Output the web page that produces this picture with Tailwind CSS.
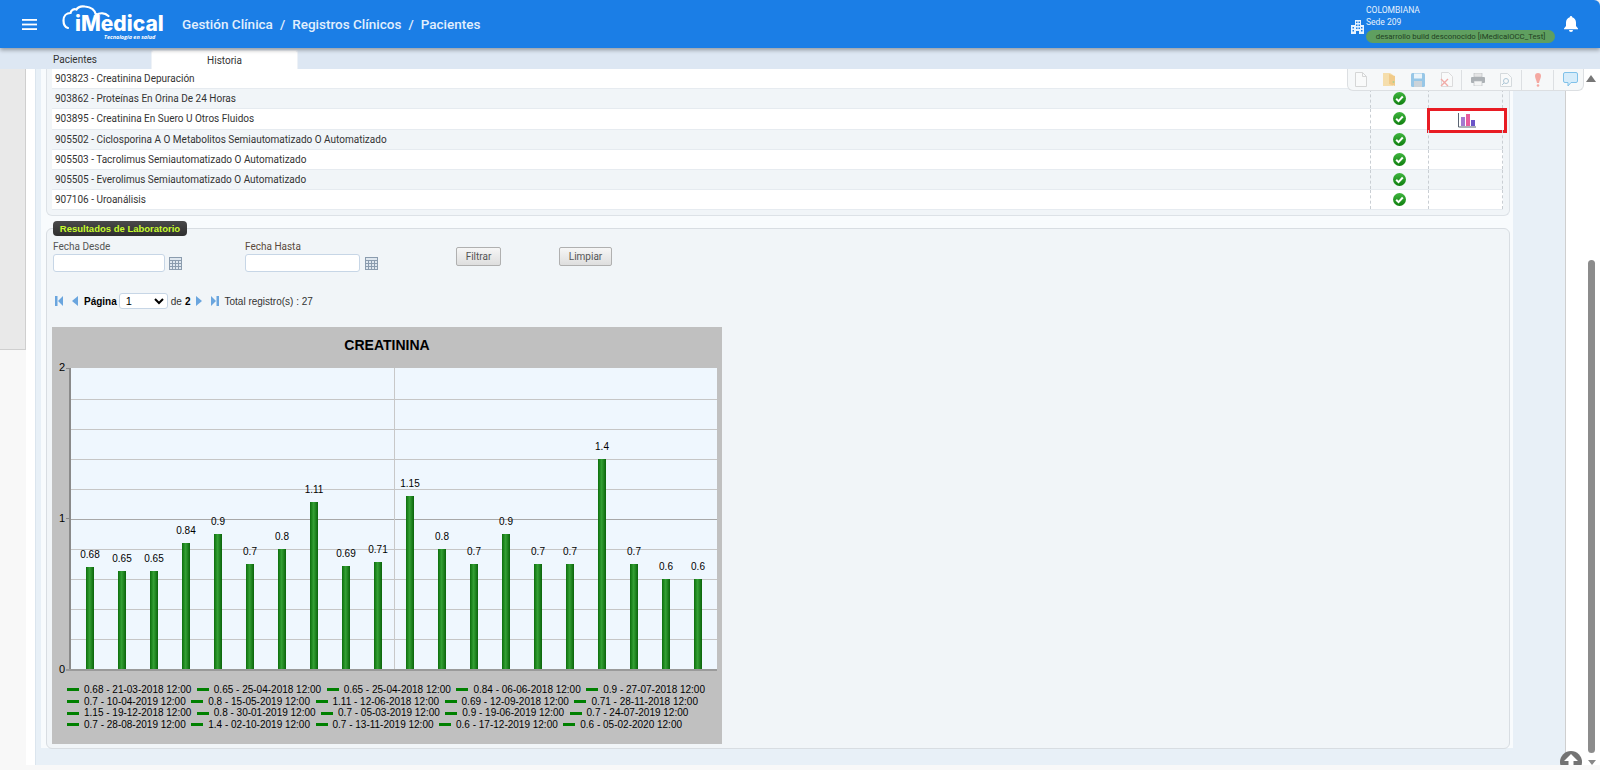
<!DOCTYPE html>
<html lang="es">
<head>
    <meta charset="UTF-8">
    <title>iMedical - Pacientes</title>
    <script src="https://cdn.jsdelivr.net/npm/@tailwindcss/browser@4"></script>
</head>
<body class="bg-[#f8f8f8] h-[770px] w-[1600px] overflow-hidden font-['Roboto',sans-serif] text-[10px] text-[#333]">

    <!-- Top bar -->
    <header class="relative z-20 h-[48px] bg-[#1b7ee6] rounded-tr-[6px] shadow-[0_2px_4px_rgba(0,0,0,0.35)] flex items-center text-white">
        <svg class="ml-[22px] w-[15px] h-[11px]" viewBox="0 0 15 11" fill="#fff">
            <rect width="15" height="1.8"/><rect y="4.6" width="15" height="1.8"/><rect y="9.2" width="15" height="1.8"/>
        </svg>
        <div class="relative ml-[25px] w-[106px] h-[48px]">
            <svg class="absolute left-0 top-0" width="106" height="30" viewBox="0 0 106 30" fill="none" stroke="#fff" stroke-width="2.200" stroke-linecap="round">
                <path d="M6 28 C2.500 27 1.500 23.500 1.500 20.500 C1.500 16 4.500 13 8.500 13 C9 10 12 8.500 14.500 9.500 C16.500 6 20 6 23 6.500 C29 7 33 10 34 15 C38 12.500 43 13 46.500 16"/>
            </svg>
            <span class="absolute left-[13px] top-[11px] font-['Inter',sans-serif] font-extrabold text-[21px] leading-[26px]">iMedical</span>
            <span class="absolute left-[42px] top-[33px] font-['Open_Sans',sans-serif] font-bold italic text-[5.500px] leading-[8px] whitespace-nowrap">Tecnología en salud</span>
        </div>
        <nav class="ml-[14px] flex gap-[7px] text-[13.500px] font-medium text-[#e2effd]">
            <span>Gestión Clínica</span><span>/</span><span>Registros Clínicos</span><span>/</span><span>Pacientes</span>
        </nav>
        <div class="ml-auto flex items-center mr-[22px]">
            <svg class="w-[13px] h-[14px] mt-[5px]" viewBox="0 0 13 14" fill="#e8f3ff">
                <path d="M4 0h6v5h3v9H8v-3H5v3H0V5h4zM5 1.500v1.500h1.500V1.500zM7.500 1.500v1.500H9V1.500zM5 4.500V6h1.500V4.500zM7.500 4.500V6H9V4.500zM1.500 7v1.500H3V7zM5 7.500V9h1.500V7.500zM7.500 7.500V9H9V7.500zM10 7v1.500h1.500V7zM1.500 10v1.500H3V10zM10 10v1.500h1.500V10z" fill-rule="evenodd"/>
            </svg>
            <div class="ml-[2px] w-[189px] h-[48px] relative text-[8.500px] leading-[10px] text-[#e6f1fd]">
                <div class="absolute left-[0px] top-[5px]">COLOMBIANA</div>
                <div class="absolute left-[0px] top-[17px]">Sede 209</div>
                <div class="absolute left-0 top-[30px] w-[189px] h-[13px] rounded-full bg-[#5f9f60] text-[#1f3f22] text-[7.800px] leading-[13px] text-center whitespace-nowrap">desarrollo build desconocido [iMedicalOCC_Test]</div>
            </div>
            <svg class="ml-[9px] w-[14px] h-[16px]" viewBox="0 0 14 16" fill="#fff">
                <path d="M7 0a1.200 1.200 0 0 1 1.200 1.300C10.600 1.900 12 4 12 6.500V10l2 2.500v.7H0v-.7L2 10V6.500C2 4 3.400 1.900 5.800 1.300A1.200 1.200 0 0 1 7 0zM5 14h4a2 2 0 0 1-4 0z"/>
            </svg>
        </div>
    </header>

    <!-- Tabs -->
    <div class="h-[21px] bg-[#dde7f3] flex items-end">
        <div class="w-[151px] pl-[53px] h-[19px] leading-[20px] text-[10px]">Pacientes</div>
        <div class="w-[147px] h-[19px] leading-[20px] text-[10px] text-center bg-white rounded-t-[3px] border-t border-x border-[#eef2f7]">Historia</div>
    </div>

    <!-- Page body -->
    <div class="relative h-[696px] flex overflow-hidden">
        <div class="w-[26px] h-[281px] bg-[#e9e9e9] border-r border-b border-[#cfcfcf]"></div>
        <div class="w-[9px] bg-white"></div>

        <main class="w-[1530px] bg-[#e8f0f7] border-l border-[#dbe5ee] pl-[5px]">
            <div class="w-[1472px] h-[679px] bg-[#f8fbfd] pl-[5px] pr-[3px]">

                <!-- Exam list -->
                <section class="h-[147px] bg-[#f1f5f8] border border-t-0 border-[#dde2e7] rounded-b-[6px] pl-[5px] pr-[6px]">
                    <div id="rows"></div>
                </section>

                <!-- Lab results -->
                <section class="mt-[12px] h-[521px] bg-[#f1f5f8] border border-[#d8dde2] rounded-[6px] px-[6px]">
                    <div class="-mt-[8px] h-[15px] w-[134px] rounded-[4px] bg-gradient-to-b from-[#4a4a4a] to-[#2e2e2e] text-center font-['Liberation_Sans',sans-serif] font-bold text-[9.500px] leading-[15px] text-[#c6fb2d] whitespace-nowrap">Resultados de Laboratorio</div>

                    <div class="mt-[4px] flex h-[33px]">
                        <div class="w-[192px]">
                            <div class="h-[14px] leading-[14px] text-[#555]">Fecha Desde</div>
                            <div class="flex items-center">
                                <input class="w-[112px] h-[18px] bg-white border border-[#c7d6e6] rounded-[3px]">
                                <svg class="ml-[4px] w-[13px] h-[13px]" viewBox="0 0 13 13" fill="none" stroke="#8b9cae"><rect x=".5" y=".5" width="12" height="12" fill="#dfe7ef"/><path d="M.5 3.500h12M.5 6.500h12M.5 9.500h12M3.500 3.500v9M6.500 3.500v9M9.500 3.500v9"/></svg>
                            </div>
                        </div>
                        <div class="w-[211px]">
                            <div class="h-[14px] leading-[14px] text-[#5b4a3a]">Fecha Hasta</div>
                            <div class="flex items-center">
                                <input class="w-[115px] h-[18px] bg-white border border-[#c7d6e6] rounded-[3px]">
                                <svg class="ml-[5px] w-[13px] h-[13px]" viewBox="0 0 13 13" fill="none" stroke="#8b9cae"><rect x=".5" y=".5" width="12" height="12" fill="#dfe7ef"/><path d="M.5 3.500h12M.5 6.500h12M.5 9.500h12M3.500 3.500v9M6.500 3.500v9M9.500 3.500v9"/></svg>
                            </div>
                        </div>
                        <button class="mt-[7px] w-[45px] h-[19px] rounded-[2px] border border-[#b0b0b0] bg-gradient-to-b from-[#f6f6f6] to-[#dedede] text-[#555] text-[10px]">Filtrar</button>
                        <button class="mt-[7px] ml-[58px] w-[53px] h-[19px] rounded-[2px] border border-[#b0b0b0] bg-gradient-to-b from-[#f6f6f6] to-[#dedede] text-[#555] text-[10px]">Limpiar</button>
                    </div>

                    <!-- Pager -->
                    <div class="mt-[20px] h-[16px] flex items-center font-['Liberation_Sans',sans-serif] text-[10px]">
                        <svg class="ml-[2px] w-[8px] h-[10px]" viewBox="0 0 8 10" fill="#6aa5de"><rect width="2.500" height="10"/><path d="M8 0v10L3 5z"/></svg>
                        <svg class="ml-[9px] w-[6px] h-[10px]" viewBox="0 0 6 10" fill="#6aa5de"><path d="M6 0v10L0 5z"/></svg>
                        <b class="ml-[6px] text-black">Página</b>
                        <select class="ml-[2px] w-[49px] h-[16px] bg-white border border-[#c7d6e6] rounded-[3px] text-[11px] text-black pl-[2px]"><option>1</option><option>2</option></select>
                        <span class="ml-[3px]">de</span>
                        <b class="ml-[3px] text-black">2</b>
                        <svg class="ml-[6px] w-[6px] h-[10px]" viewBox="0 0 6 10" fill="#6aa5de"><path d="M0 0v10l6-5z"/></svg>
                        <svg class="ml-[9px] w-[8px] h-[10px]" viewBox="0 0 8 10" fill="#6aa5de"><rect x="5.500" width="2.500" height="10"/><path d="M0 0v10l5-5z"/></svg>
                        <span class="ml-[5px]">Total registro(s) : 27</span>
                    </div>

                    <!-- Chart -->
                    <div class="mt-[18px] -ml-[1px] w-[670px] h-[417px] bg-[#c0c0c0] font-['Liberation_Sans',sans-serif] text-black">
                        <svg id="chart" class="block" width="670" height="350" viewBox="0 0 670 350" font-family="'Liberation Sans',sans-serif"></svg>
                        <div id="legend" class="mt-[7px] pl-[15px] text-[10px] leading-[11.700px]"></div>
                    </div>
                </section>
            </div>
        </main>

        <div class="flex-1 bg-white border-l border-[#cfcfcf]"></div>

        <!-- Floating toolbar -->
        <div class="absolute top-0 left-[1347px] w-[237px] h-[22px] bg-[#f6f8f9] border border-t-0 border-[#dcdfe2] rounded-b-[6px] flex items-center">
            <svg class="ml-[7px] w-[12px] h-[15px] opacity-70" viewBox="0 0 12 15" fill="#fbfbfb" stroke="#c8c8c8"><path d="M.5.5h7l4 4v10H.5z"/><path d="M7.500.5v4h4" fill="none"/></svg>
            <svg class="ml-[15px] w-[15px] h-[15px] opacity-70" viewBox="0 0 15 15"><path d="M1 1h7l3 2v11H1z" fill="#f5d48c"/><path d="M7 2l6 2v10l-6-2z" fill="#f0b95c"/><circle cx="11.500" cy="10" r="1" fill="#8fbf6a"/></svg>
            <svg class="ml-[14px] w-[14px] h-[14px] opacity-70" viewBox="0 0 14 14"><rect width="14" height="14" rx="1.500" fill="#6fb3e0"/><rect x="3" y="0.500" width="8" height="5" fill="#e6f3fb"/><rect x="3" y="8" width="8" height="6" fill="#b9c4cc"/></svg>
            <svg class="ml-[15px] w-[13px] h-[15px] opacity-70" viewBox="0 0 13 15" fill="#fbfbfb" stroke="#d0d0d0"><path d="M1.500.5h7l4 4v10h-11z"/><path d="M1 7l7 7M8 7l-7 7" stroke="#ef8a84" stroke-width="1.400"/></svg>
            <div class="ml-[8px] w-px h-[20px] bg-[#dcdfe2]"></div>
            <svg class="ml-[9px] w-[14px] h-[13px] opacity-70" viewBox="0 0 14 13"><rect x="3" width="8" height="4" fill="#dedede" stroke="#9aa0a5" stroke-width=".6"/><rect y="4" width="14" height="6" rx="1" fill="#8d9499"/><rect x="3" y="8" width="8" height="5" fill="#f4f4f4" stroke="#9aa0a5" stroke-width=".6"/></svg>
            <svg class="ml-[15px] w-[12px] h-[14px] opacity-70" viewBox="0 0 12 14" fill="#fbfbfb" stroke="#c8ced2"><path d="M.5.5h7l4 4v9H.5z"/><circle cx="6" cy="8" r="2.500" stroke="#8fb3c9"/><path d="M4 10l-2 2" stroke="#8fb3c9"/></svg>
            <div class="ml-[9px] w-px h-[20px] bg-[#dcdfe2]"></div>
            <svg class="ml-[13px] w-[6px] h-[14px] opacity-70" viewBox="0 0 6 14" fill="#f4877d"><path d="M0 3a3 3 0 0 1 6 0c0 2-1.500 4-2 7H2C1.500 7 0 5 0 3z"/><circle cx="3" cy="12.500" r="1.300"/></svg>
            <div class="ml-[12px] w-px h-[20px] bg-[#dcdfe2]"></div>
            <svg class="ml-[9px] w-[15px] h-[15px] opacity-80" viewBox="0 0 15 15"><path d="M2 .5h11a1.500 1.500 0 0 1 1.500 1.500v7a1.500 1.500 0 0 1-1.500 1.500H8L5 14v-3.500H2A1.500 1.500 0 0 1 .5 9V2A1.500 1.500 0 0 1 2 .5z" fill="#cfeafb" stroke="#63b4e6"/></svg>
        </div>

        <!-- Scrollbar -->
        <svg class="absolute left-[1586px] top-[6px] w-[10px] h-[7px]" viewBox="0 0 10 7" fill="#777"><path d="M5 0l5 7H0z"/></svg>
        <div class="absolute left-[1588px] top-[191px] w-[7px] h-[493px] rounded-full bg-[#8c8c8c]"></div>
        <svg class="absolute left-[1588px] top-[691px] w-[8px] h-[5px]" viewBox="0 0 8 5" fill="#888"><path d="M0 0h8L4 5z"/></svg>

        <!-- Back to top -->
        <div class="absolute left-[1560px] top-[682px] w-[22px] h-[22px] rounded-full bg-[#737373] flex items-start justify-center">
            <svg class="mt-[3px] w-[14px] h-[12px]" viewBox="0 0 14 12" fill="#fff"><path d="M7 0l7 7H9.500v5h-5V7H0z"/></svg>
        </div>
    </div>

    <script>
        const exams = [
            ['903823 - Creatinina Depuración', false],
            ['903862 - Proteínas En Orina De 24 Horas', true],
            ['903895 - Creatinina En Suero U Otros Fluidos', true],
            ['905502 - Ciclosporina A O Metabolitos Semiautomatizado O Automatizado', true],
            ['905503 - Tacrolimus Semiautomatizado O Automatizado', true],
            ['905505 - Everolimus Semiautomatizado O Automatizado', true],
            ['907106 - Uroanálisis', true]
        ];
        const check = `<svg width="13" height="13" viewBox="0 0 13 13"><defs><linearGradient id="ok" x1="0" x2="0" y1="0" y2="1"><stop offset="0" stop-color="#3fb53f"/><stop offset="1" stop-color="#0f7f0f"/></linearGradient></defs><circle cx="6.500" cy="6.500" r="6.500" fill="url(#ok)"/><path d="M3.200 6.800l2.300 2.300 4.300-4.600" fill="none" stroke="#fff" stroke-width="2"/></svg>`;
        const chartIcon = `<svg width="18" height="15" viewBox="0 0 18 15"><path d="M.5 0v14H18" fill="none" stroke="#5b6472"/><rect x="3" y="4" width="4" height="9" fill="#a37ad0"/><rect x="8" y="1" width="4" height="12" fill="#e85c9c"/><rect x="13" y="7" width="4" height="6" fill="#6b55c8"/></svg>`;

        document.getElementById('rows').innerHTML = exams.map(([name, ok], i) => `
            <div class="h-[20.200px] flex ${i % 2 ? 'bg-[#f1f5f8]' : 'bg-white'} border-b border-[#e6ebf0]">
                <div class="w-[1318px] pl-[3px] leading-[19px] text-[#333]">${name}</div>
                <div class="relative w-[58px] flex items-center justify-center border-l border-dashed border-[#c9ced3]">${ok ? check : ''}</div>
                <div class="relative w-[75px] flex items-center justify-center border-x border-dashed border-[#c9ced3]">
                    ${i === 2 ? `<div class="absolute -left-[2px] -top-[1px] w-[80px] h-[25px] border-[3px] border-[#e81c24] bg-white flex items-center justify-center">${chartIcon}</div>` : ''}
                </div>
            </div>`).join('');

        const points = [
            [0.68, '21-03-2018'], [0.65, '25-04-2018'], [0.65, '25-04-2018'], [0.84, '06-06-2018'], [0.9, '27-07-2018'],
            [0.7, '10-04-2019'], [0.8, '15-05-2019'], [1.11, '12-06-2018'], [0.69, '12-09-2018'], [0.71, '28-11-2018'],
            [1.15, '19-12-2018'], [0.8, '30-01-2019'], [0.7, '05-03-2019'], [0.9, '19-06-2019'], [0.7, '24-07-2019'],
            [0.7, '28-08-2019'], [1.4, '02-10-2019'], [0.7, '13-11-2019'], [0.6, '17-12-2019'], [0.6, '05-02-2020']
        ];

        // plot area, in chart coordinates: 150px per unit, baseline at y 342
        const base = 342;
        let svg = `<defs><linearGradient id="bar" x1="0" x2="1" y1="0" y2="0"><stop offset="0" stop-color="#0c6f0c"/><stop offset=".45" stop-color="#34a034"/><stop offset="1" stop-color="#0a640a"/></linearGradient></defs>`;
        svg += `<text x="335" y="23" text-anchor="middle" font-size="14" font-weight="bold">CREATININA</text>`;
        svg += `<rect x="18" y="41" width="647" height="301" fill="#eff7fe"/>`;
        for (let i = 1; i < 10; i++) {
            svg += `<rect x="18" y="${base - i * 30}" width="647" height="1" fill="${i === 5 ? '#a8a8a8' : '#c6c6c6'}"/>`;
        }
        svg += `<rect x="342" y="41" width="1" height="301" fill="#c8c8c8"/>`;
        svg += `<rect x="17" y="41" width="2" height="302" fill="#8a8a8a"/><rect x="14" y="342" width="651" height="2" fill="#9a9a9a"/>`;
        svg += `<rect x="14" y="41" width="4" height="1" fill="#8a8a8a"/><rect x="14" y="191" width="4" height="1" fill="#8a8a8a"/>`;
        [['2', 44], ['1', 195], ['0', 346]].forEach(([t, y]) => { svg += `<text x="7" y="${y}" font-size="11">${t}</text>`; });
        points.forEach(([v, d], i) => {
            const cx = 38 + i * 32, h = Math.round(v * 150);
            svg += `<rect x="${cx - 4}" y="${base - h}" width="8" height="${h}" fill="url(#bar)"/>`;
            svg += `<text x="${cx}" y="${base - h - 9}" text-anchor="middle" font-size="10">${v}</text>`;
        });
        document.getElementById('chart').innerHTML = svg;

        let legend = '';
        for (let r = 0; r < 4; r++) {
            legend += `<div class="flex h-[11.700px] whitespace-nowrap">` + points.slice(r * 5, r * 5 + 5).map(([v, d]) =>
                `<span class="flex items-center mr-[5.500px]"><i class="w-[12px] h-[3px] bg-[#008000] mr-[5px]"></i>${v} - ${d} 12:00</span>`).join('') + `</div>`;
        }
        document.getElementById('legend').innerHTML = legend;
    </script>
</body>
</html>
